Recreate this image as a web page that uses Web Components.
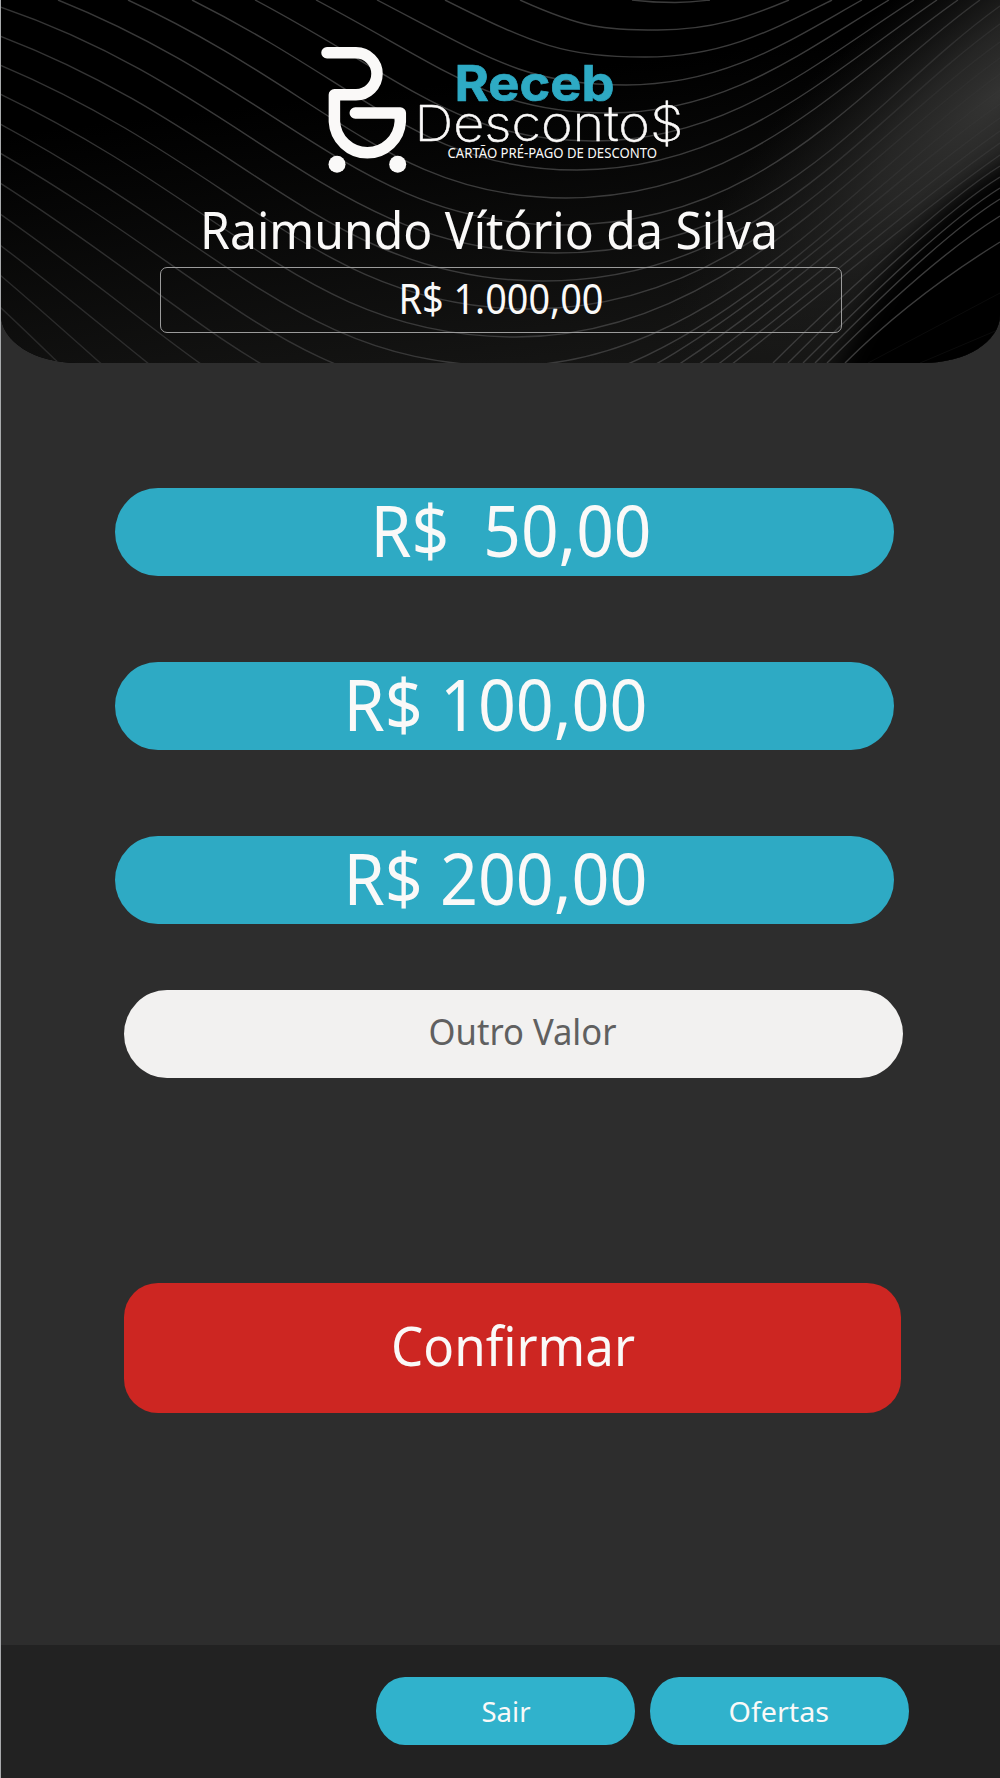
<!DOCTYPE html>
<html lang="pt-BR">
<head>
<meta charset="utf-8">
<title>Receb Desconto$</title>
<style>
  :root{--bg:#2d2d2d;--bar:#222;--teal:#2eaac4;--teal-2:#30b2cc;--red:#cd2622;--paper:#f2f1f0;--ink:#faf9f8;--gray:#606060;--font:'Noto Sans','Open Sans',sans-serif}
  body{margin:0;background:var(--bg);color:var(--ink);font-family:var(--font)}
</style>
</head>
<body>
<recarga-app></recarga-app>
<script>
/* Tela de recarga do cartão.
   <fit-text>    texto ajustado a uma largura fixa (x, y = linha de base, w, size)
   <wave-bg>     fundo preto com as curvas do cabeçalho
   <brand-logo>  carrinho + nome
   <value-pill>  botão arredondado, recebe o texto por slot */
(function () {
  function define(name, css, html) {
    customElements.define(name, class extends HTMLElement {
      connectedCallback() {
        if (this.shadowRoot) return;
        const root = this.attachShadow({ mode: 'open' });
        root.innerHTML = '<style>' + css + '</style>' + (typeof html === 'function' ? html(this) : html);
      }
    });
  }

  define('fit-text', `
    :host{display:block;width:100%;height:100%}
    svg{display:block;width:100%;height:100%;overflow:visible}
    text{fill:currentColor;white-space:pre}`,
    el => {
      const a = n => el.getAttribute(n);
      return '<svg><text x="' + a('x') + '" y="' + a('y') + '" font-size="' + a('size') +
        '" textLength="' + a('w') + '" lengthAdjust="spacingAndGlyphs">' + a('text') + '</text></svg>';
    });

  // [x, y, inclinação à esquerda, x e y do ponto mais baixo, x, y, inclinação à direita]
  const waves = [
    [632, 0, .12, 675, 2.5, 710, 0, -.12],
    [520, 0, .45, 658, 30, 789, 0, -.42],
    [445, 0, .5, 645, 57, 832, 0, -.5],
    [377, 0, .52, 626, 85, 862, 0, -.56],
    [316, 0, .53, 609, 113, 889, 0, -.6],
    [255, 0, .53, 593, 141, 914, 0, -.64],
    [192, 0, .5, 577, 170, 937, 0, -.68],
    [128, 0, .46, 566, 198, 958, 0, -.7],
    [58, 0, .4, 562, 225, 980, 0, -.72],
    [0, 7, .34, 555, 253, 1000, 6, -.72],
    [0, 36, .38, 543, 281, 1000, 24, -.72],
    [0, 65, .42, 530, 309, 1000, 42, -.72],
    [0, 94, .48, 516, 337, 1000, 58, -.72],
    [0, 124, .54, 508, 366, 1000, 74, -.72],
    [0, 153, .58, 492, 394, 1000, 90, -.72],
    [0, 183, .64, 470, 422, 1000, 104, -.7],
    [0, 214, .7, 450, 452, 1000, 118, -.7],
    [0, 245, .76, 430, 484, 1000, 131, -.7],
    [0, 275, .85, 410, 520, 1000, 143, -.7],
    [0, 307, .93, 380, 560, 1000, 155, -.7]
  ];
  // curvas que sobem da borda inferior: [x em y=363, y em x=1000]
  const risers = [[773, 166], [788, 177], [803, 188], [815, 199], [827, 216], [845, 242]];
  const n = v => v.toFixed(1);
  const wavePath = ([lx, ly, ls, mx, my, rx, ry, rs]) => {
    const a = (mx - lx) * .45, b = (mx - lx) * .4, d = (rx - mx) * .3;
    return '<path d="M' + [lx, ly].join() + 'C' + [lx + a, ly + a * ls, mx - b, my, mx, my].map(n).join() +
      'S' + [rx - d, ry - d * rs, rx, ry].map(n).join() + '"/>';
  };
  const riserPath = ([x, y]) =>
    '<path d="M' + x + ',363C' + [x + 48, 315, 942, y + 36, 1000, y].join() + '"/>';

  define('wave-bg', `
    :host{display:block;width:999px;height:363px}
    svg{display:block}`,
    () => `<svg width="999" height="363" viewBox="1 0 999 363">
      <defs>
        <linearGradient id="base" x1=".3" y1="0" x2=".62" y2="1"><stop offset=".25" stop-color="#000"/><stop offset="1" stop-color="#151514"/></linearGradient>
        <radialGradient id="glow" gradientUnits="userSpaceOnUse" cx="0" cy="0" r="1" gradientTransform="translate(1000 95) rotate(-42) scale(430 145)">
          <stop offset="0" stop-color="#343433"/><stop offset=".35" stop-color="#2b2b2a" stop-opacity=".85"/><stop offset="1" stop-color="#1c1c1b" stop-opacity="0"/>
        </radialGradient>
        <radialGradient id="fade" gradientUnits="userSpaceOnUse" cx="0" cy="0" r="1" gradientTransform="translate(975 95) rotate(-42) scale(300 90)">
          <stop offset=".2" stop-color="#444"/><stop offset="1" stop-color="#fff"/>
        </radialGradient>
        <linearGradient id="ink" gradientUnits="userSpaceOnUse" x1="0" y1="330" x2="260" y2="100"><stop offset="0" stop-color="#282828"/><stop offset="1" stop-color="#3b3b3b"/></linearGradient>
        <mask id="m" maskUnits="userSpaceOnUse" x="0" y="0" width="1000" height="363"><rect width="1000" height="363" fill="url(#fade)"/></mask>
        <filter id="soft" x="-20%" y="-20%" width="140%" height="140%"><feGaussianBlur stdDeviation="12"/></filter>
      </defs>
      <rect width="1000" height="363" fill="url(#base)"/>
      <rect width="1000" height="363" fill="url(#glow)"/>
      <path d="M1050 142C965 182 888 234 826 400H1050z" fill="#000" filter="url(#soft)"/>
      <g fill="none" stroke="url(#ink)" stroke-width="1.4" mask="url(#m)">${waves.map(wavePath).join('')}${risers.map(riserPath).join('')}</g>
      <path d="M868 363L1000 293M920 363L1000 329" stroke="#0b0b0b" fill="none"/>
    </svg>`);

  define('brand-logo', `
    :host{display:block;width:380px;height:140px}
    svg{display:block;overflow:visible}
    .receb{font:700 49px Inter,sans-serif;fill:var(--teal);stroke:var(--teal);stroke-width:.7px}
    .desc{font:200 49.5px Inter,sans-serif;stroke:#faf9f8;stroke-width:.5px}
    .tag{font:400 14.3px var(--font)}`,
    `<svg width="380" height="140" viewBox="310 40 380 140" fill="#faf9f8">
      <path d="M327 52.8H356A21 21 0 0 1 356 94.8H334.4V121.6A33 33 0 0 0 400.3 121.6V113H355.3" fill="none" stroke="#faf9f8" stroke-width="11.5" stroke-linecap="round" stroke-linejoin="round"/>
      <circle cx="337" cy="164.3" r="8.5"/><circle cx="397.7" cy="164.3" r="8.5"/>
      <text class="receb" x="454.5" y="100.7" textLength="160" lengthAdjust="spacingAndGlyphs">Receb</text>
      <text class="desc" x="414.5" y="140.7" textLength="269" lengthAdjust="spacingAndGlyphs">Desconto$</text>
      <text class="tag" x="447.5" y="157.7" textLength="209.5" lengthAdjust="spacingAndGlyphs">CARTÃO PRÉ-PAGO DE DESCONTO</text>
    </svg>`);

  define('account-header', `
    :host{display:grid;height:363px;width:999px;overflow:hidden;background:#000;border-radius:0 0 76px 76px/0 0 48px 48px}
    wave-bg,.body{grid-area:1/1}
    .body{display:flex;flex-direction:column;z-index:1}
    brand-logo{margin:40px 0 0 309px}
    .name{height:87px}
    .balance{box-sizing:border-box;width:682px;height:66px;margin-left:159px;border:1px solid #9b9b9b;border-radius:7px}`,
    `<wave-bg></wave-bg>
    <div class="body">
      <brand-logo></brand-logo>
      <div class="name"><fit-text x="199" y="69" w="578" size="50.5" text="Raimundo Vítório da Silva"></fit-text></div>
      <div class="balance"><fit-text x="237.5" y="45.5" w="205" size="41" text="R$ 1.000,00"></fit-text></div>
    </div>`);

  define('value-pill', `
    :host{display:block;width:779px;height:88px;border-radius:43px/44px;background:var(--teal)}
    :host([kind=other]){background:var(--paper);color:var(--gray)}
    :host([kind=confirm]){width:777px;height:130px;border-radius:34px;background:var(--red)}
    :host([kind=nav]){width:259px;height:68px;border-radius:29px/34px;background:var(--teal-2)}`,
    '<slot></slot>');

  define('recarga-app', `
    :host{box-sizing:border-box;display:flex;flex-direction:column;width:1000px;height:1778px;border-left:1px solid #a8aaac;background:var(--bg)}
    main{flex:1;display:flex;flex-direction:column;align-items:flex-start;padding:125px 0 0 123px}
    .values{display:flex;flex-direction:column;gap:86px;margin-left:-9px}
    [kind=other]{margin-top:66px}
    [kind=confirm]{margin-top:205px}
    footer{box-sizing:border-box;display:flex;gap:15px;height:133px;padding:32px 0 0 374.5px;background:var(--bar)}`,
    `<account-header></account-header>
    <main>
      <div class="values">
        <value-pill><fit-text x="255.5" y="69" w="281" size="70.5" text="R$  50,00"></fit-text></value-pill>
        <value-pill><fit-text x="228.5" y="69" w="304" size="70.5" text="R$ 100,00"></fit-text></value-pill>
        <value-pill><fit-text x="228.5" y="69" w="304" size="70.5" text="R$ 200,00"></fit-text></value-pill>
      </div>
      <value-pill kind="other"><fit-text x="304.5" y="55" w="188" size="37" text="Outro Valor"></fit-text></value-pill>
      <value-pill kind="confirm"><fit-text x="267" y="83" w="244" size="54" text="Confirmar"></fit-text></value-pill>
    </main>
    <footer>
      <value-pill kind="nav"><fit-text x="105.5" y="44.5" w="49" size="27.5" text="Sair"></fit-text></value-pill>
      <value-pill kind="nav"><fit-text x="78.5" y="44.5" w="100.5" size="27.5" text="Ofertas"></fit-text></value-pill>
    </footer>`);
})();
</script>
</body>
</html>
